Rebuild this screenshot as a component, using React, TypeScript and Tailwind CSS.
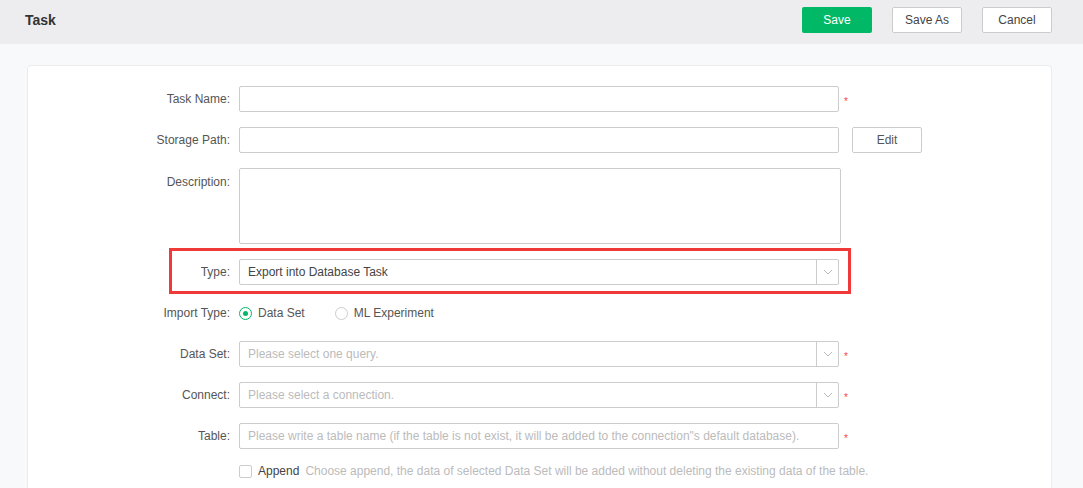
import React from 'react';

const font = { fontFamily: '"Liberation Sans", Arial, sans-serif' };

function Required() {
  return <span className="ml-[5px] mt-[6px] text-[10px] leading-none text-[#f04848]">*</span>;
}

function Chevron() {
  return (
    <svg width="10" height="6" viewBox="0 0 10 6" fill="none">
      <path d="M1 1l4 4 4-4" stroke="#b8b8b8" strokeWidth="1" />
    </svg>
  );
}

function Row({ label, children, top = false }: { label: string; children: React.ReactNode; top?: boolean }) {
  return (
    <div className={top ? 'flex items-start' : 'flex items-center'}>
      <div className={`w-[211px] shrink-0 pr-[9px] text-right text-[12px] text-[#555] ${top ? 'pt-[5px]' : ''}`}>{label}</div>
      {children}
    </div>
  );
}

function TextBox({ placeholder }: { placeholder?: string }) {
  return (
    <div className="flex h-[26px] w-[600px] items-center rounded-[2px] border border-[#cccccc] bg-white px-[8px] text-[12px] text-[#bbbbbb]">
      {placeholder}
    </div>
  );
}

function SelectBox({ value, placeholder }: { value?: string; placeholder?: string }) {
  return (
    <div className="flex h-[26px] w-[600px] items-center rounded-[2px] border border-[#cccccc] bg-white text-[12px]">
      <div className={`flex-1 px-[8px] ${value ? 'text-[#444]' : 'text-[#bbbbbb]'}`}>{value ?? placeholder}</div>
      <div className="flex h-full w-[22px] items-center justify-center border-l border-[#cccccc]">
        <Chevron />
      </div>
    </div>
  );
}

function Radio({ checked, label }: { checked?: boolean; label: string }) {
  return (
    <label className="flex items-center gap-[6px] text-[12px] text-[#555]">
      <span
        className={`flex h-[13px] w-[13px] items-center justify-center rounded-full border ${
          checked ? 'border-[#00b865]' : 'border-[#cccccc]'
        } bg-white`}
      >
        {checked && <span className="h-[5px] w-[5px] rounded-full bg-[#00b865]" />}
      </span>
      {label}
    </label>
  );
}

export default function App() {
  return (
    <div className="h-[488px] w-[1083px] overflow-hidden bg-[#f8f9fb]" style={font}>
      <header className="flex h-[44px] items-center justify-between bg-[#ededef] pl-[25px] pr-[31px]">
        <h1 className="pb-[4px] text-[14px] font-bold text-[#333]">Task</h1>
        <div className="flex gap-[20px] pb-[4px] text-[12px]">
          <button className="h-[26px] w-[70px] rounded-[2px] bg-[#00b865] text-white">Save</button>
          <button className="h-[26px] w-[70px] rounded-[2px] border border-[#cccccc] bg-white text-[#444]">Save As</button>
          <button className="h-[26px] w-[70px] rounded-[2px] border border-[#cccccc] bg-white text-[#444]">Cancel</button>
        </div>
      </header>

      <div className="ml-[27px] mr-[31px] mt-[21px] rounded-[4px] border border-[#ececec] bg-white pt-[20px] pb-[20px]">
        <div className="flex flex-col gap-[15px]">
          <Row label="Task Name:">
            <TextBox />
            <Required />
          </Row>
          <Row label="Storage Path:">
            <TextBox />
            <button className="ml-[13px] h-[26px] w-[70px] rounded-[2px] border border-[#cccccc] bg-white text-[12px] text-[#555]">
              Edit
            </button>
          </Row>
          <Row label="Description:" top>
            <div className="h-[76px] w-[602px] rounded-[2px] border border-[#cccccc] bg-white" />
          </Row>
          <div className="relative">
            <Row label="Type:">
              <SelectBox value="Export into Database Task" />
            </Row>
            <div className="pointer-events-none absolute left-[141px] top-[-11px] h-[46px] w-[682px] border-[3px] border-[#f03a3a]" />
          </div>
          <Row label="Import Type:">
            <div className="flex h-[26px] items-center gap-[30px]">
              <Radio checked label="Data Set" />
              <Radio label="ML Experiment" />
            </div>
          </Row>
          <Row label="Data Set:">
            <SelectBox placeholder="Please select one query." />
            <Required />
          </Row>
          <Row label="Connect:">
            <SelectBox placeholder="Please select a connection." />
            <Required />
          </Row>
          <Row label="Table:">
            <TextBox placeholder={'Please write a table name (if the table is not exist, it will be added to the connection"s default database).'} />
            <Required />
          </Row>
          <Row label="">
            <div className="flex h-[14px] items-center text-[12px]">
              <span className="mr-[6px] h-[13px] w-[13px] rounded-[2px] border border-[#cccccc] bg-white" />
              <span className="text-[#444]">Append</span>
              <span className="ml-[6px] text-[#bbbbbb]">
                Choose append, the data of selected Data Set will be added without deleting the existing data of the table.
              </span>
            </div>
          </Row>
        </div>
      </div>
    </div>
  );
}
